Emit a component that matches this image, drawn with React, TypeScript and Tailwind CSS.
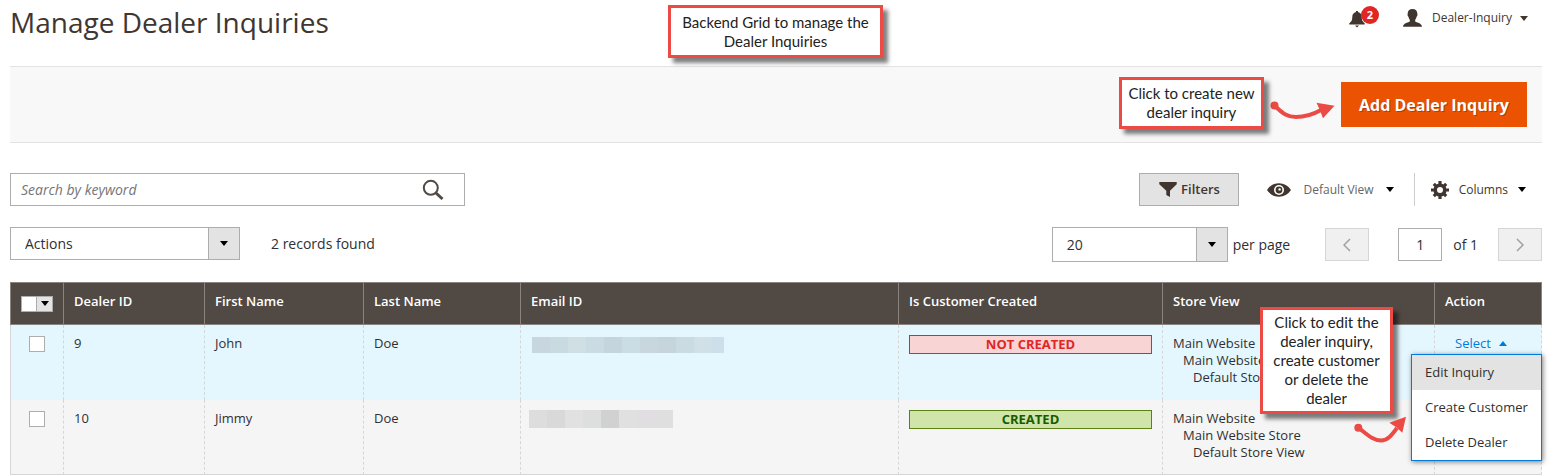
import type { ReactNode } from 'react';

type Tile = { x: number; width: number; color: string };

type Dealer = {
    id: number;
    firstName: string;
    lastName: string;
    mask: { height: number; tiles: Tile[] };
    created: boolean;
};

const buildTiles = (start: number, colors: string[], lastWidth = 18): Tile[] =>
    colors.map((color, i) => ({
        x: start + i * 18,
        width: i === colors.length - 1 ? lastWidth : 18,
        color,
    }));

const dealers: Dealer[] = [
    {
        id: 9,
        firstName: 'John',
        lastName: 'Doe',
        mask: {
            height: 16,
            tiles: buildTiles(
                3,
                ['#c8d7df', '#c9dae1', '#cfdfe4', '#cbdbe3', '#c6d4dd', '#cbdde4', '#c8d6de', '#c6d4dc', '#cbdbe2', '#d1e0e7', '#cddfea'],
                12,
            ),
        },
        created: false,
    },
    {
        id: 10,
        firstName: 'Jimmy',
        lastName: 'Doe',
        mask: {
            height: 18,
            tiles: buildTiles(0, ['#dcdddc', '#d9d9d9', '#e1e1e1', '#dddfde', '#d1d1d1', '#e0e0e0', '#e0dee1', '#dfdfdf']),
        },
        created: true,
    },
];

const columns = ['Dealer ID', 'First Name', 'Last Name', 'Email ID', 'Is Customer Created', 'Store View', 'Action'];

function Caret({ up = false, className = 'text-black' }: { up?: boolean; className?: string }) {
    return (
        <svg className={`w-2 h-[5px] shrink-0 ${className}`} viewBox="0 0 8 5" fill="currentColor">
            <path d={up ? 'M0 5 4 0l4 5z' : 'M0 0h8L4 5z'} />
        </svg>
    );
}

function Callout({ className, children }: { className: string; children: ReactNode }) {
    return (
        <div
            className={`absolute z-20 flex items-center justify-center text-center border-3 border-[#eb4a45] bg-white text-[#222222] text-[15px] leading-[19px] font-['Lato',sans-serif] font-normal shadow-[5px_5px_4px_rgba(0,0,0,0.5)] ${className}`}
        >
            {children}
        </div>
    );
}

function DropSelect({ label, options, className }: { label: string; options: string[]; className: string }) {
    return (
        <div className={`relative ${className}`}>
            <select
                aria-label={label}
                className="w-full h-full appearance-none rounded-none border border-[#adadad] bg-white pl-3.5 pr-9 text-sm text-[#303030]"
            >
                {options.map((option) => (
                    <option key={option}>{option}</option>
                ))}
            </select>
            <span className="pointer-events-none absolute inset-y-0 right-0 w-8 flex items-center justify-center border border-[#adadad] bg-[#e3e3e3]">
                <Caret />
            </span>
        </div>
    );
}

export default function App() {
    return (
        <div className="pl-2.5 pr-2 pb-px bg-white text-[#41362f] text-[13px] font-['Open_Sans',sans-serif]">
            {/* Page header */}
            <header className="relative flex items-start justify-between h-[66px]">
                <h1 className="pt-1 text-[28px] leading-9">Manage Dealer Inquiries</h1>

                <Callout className="left-[658px] top-[5px] w-[215px] h-[53px]">
                    Backend Grid to manage the
                    <br />
                    Dealer Inquiries
                </Callout>

                <div className="flex items-center h-6 mt-1.5 pr-3.5">
                    <button type="button" aria-label="Notifications" className="relative w-[30px] h-6">
                        <svg className="absolute left-0 top-1 w-4 h-[18px]" viewBox="0 0 16 18" fill="currentColor">
                            <path d="M7 1h2v1c2.4.6 3.7 2.400 3.700 4.800 0 3.400.8 4.800 3 6.400v1.300H.3v-1.300c2.200-1.600 3-3 3-6.400C3.300 4.400 4.600 2.600 7 2z" />
                            <path d="M6 15.600h4l-2 2z" />
                        </svg>
                        <span className="absolute right-0 top-0 size-[18px] rounded-full bg-[#e22626] text-white text-[11px] leading-[18px] font-bold text-center">
                            2
                        </span>
                    </button>
                    <button type="button" className="flex items-center ml-6 text-xs">
                        <svg className="w-[19px] h-[18px] mr-2.5" viewBox="0 0 19 18" fill="currentColor">
                            <path d="M9.500 0c3.100 0 4.800 1.700 4.800 4.600 0 .5.3.9.2 1.500-.1.800-.5 1.300-.9 1.700-.3 1.200-.8 2.200-1.400 3v1.800c1.800 1.200 6.300 1.400 6.800 5.100H0c.5-3.700 5-3.900 6.800-5.100v-1.800c-.6-.8-1.100-1.800-1.400-3-.4-.4-.8-.9-.9-1.700-.1-.6.2-1 .2-1.500C4.700 1.700 6.400 0 9.500 0z" />
                        </svg>
                        <span className="mr-2">Dealer-Inquiry</span>
                        <Caret className="text-[#41362f]" />
                    </button>
                </div>
            </header>

            {/* Main actions */}
            <div className="relative flex justify-end py-[15px] pr-[15px] border-y border-[#e3e3e3] bg-[#f8f8f8]">
                <Callout className="right-[278px] top-2.5 w-[145px] h-[52px]">
                    Click to create new
                    <br />
                    dealer inquiry
                </Callout>
                <svg className="absolute right-[206px] top-[33px] w-[66px] h-6" viewBox="0 0 66 24" fill="none">
                    <circle cx="4.5" cy="5.5" r="4" fill="#eb4a45" />
                    <path d="M4.500 5.500C13 14 18 17 26 17s17-2.500 25-7" stroke="#eb4a45" strokeWidth="4" />
                    <path d="M64.500 5.700 46.500 2.700l3 6.500 3.500 9z" fill="#eb4a45" />
                </svg>
                <button
                    type="button"
                    className="w-[186px] h-[45px] bg-[#eb5202] text-white text-base font-bold [text-shadow:1px_1px_0_rgba(0,0,0,0.25)]"
                >
                    Add Dealer Inquiry
                </button>
            </div>

            {/* Search and view controls */}
            <div className="flex items-center justify-between mt-[30px]">
                <div className="relative w-[455px] h-[33px]">
                    <input
                        type="text"
                        aria-label="Search by keyword"
                        placeholder="Search by keyword"
                        className="w-full h-full border border-[#adadad] pl-2.5 pr-14 text-sm placeholder:italic placeholder:text-[#757575]"
                    />
                    <button type="button" aria-label="Search" className="absolute right-[21px] top-1.5">
                        <svg className="size-[22px]" viewBox="0 0 22 22" fill="none" stroke="#514943">
                            <circle cx="8.8" cy="8.8" r="7" strokeWidth="2" />
                            <path d="m14 14 6.500 6" strokeWidth="3" />
                        </svg>
                    </button>
                </div>

                <div className="flex items-center h-[33px]">
                    <button
                        type="button"
                        className="flex items-center justify-center gap-1 w-[100px] h-full border border-[#adadad] bg-[#e3e3e3] font-semibold"
                    >
                        <svg className="w-[18px] h-[15px]" viewBox="0 0 18 15" fill="currentColor">
                            <path d="M.3 0h17.400v2.200L11 8.700V15L7.300 13V8.700L.3 2.200z" />
                        </svg>
                        Filters
                    </button>
                    <button type="button" className="flex items-center ml-7 mr-5 text-xs text-[#666666]">
                        <svg className="w-6 h-3.5 mr-3 text-[#41362f]" viewBox="0 0 24 14">
                            <path d="M0 7C3 2.500 7 .3 12 .3S21 2.500 24 7c-3 4.500-7 6.700-12 6.700S3 11.500 0 7z" fill="currentColor" />
                            <circle cx="12" cy="7" r="5" fill="#fff" />
                            <circle cx="12" cy="7" r="3.4" fill="currentColor" />
                            <circle cx="12.6" cy="6.4" r="1.2" fill="#fff" />
                        </svg>
                        <span className="mr-3">Default View</span>
                        <Caret />
                    </button>
                    <button type="button" className="flex items-center h-full border-l border-[#cccccc] pl-4 pr-4 text-xs">
                        <svg className="size-[18px] mr-2.5" viewBox="-9 -9 18 18" fill="none" stroke="currentColor">
                            <circle r="4.8" strokeWidth="3.6" />
                            <path
                                d="M0-9v3M0 6v3M-9 0h3M6 0h3M-6.200-6.200l2 2M4.200 4.200l2 2M-6.200 6.200l2-2M4.200-4.200l2-2"
                                strokeWidth="3.2"
                            />
                        </svg>
                        <span className="mr-2.5">Columns</span>
                        <Caret />
                    </button>
                </div>
            </div>

            {/* Mass actions and pager */}
            <div className="flex items-start justify-between mt-[21px] text-sm text-[#303030]">
                <div className="flex items-center">
                    <DropSelect label="Actions" options={['Actions']} className="w-[230px] h-[33px]" />
                    <span className="ml-[31px]">2 records found</span>
                </div>
                <div className="flex items-center">
                    <DropSelect label="Records per page" options={['20', '30', '50']} className="w-[176px] h-[35px]" />
                    <span className="ml-[5px]">per page</span>
                    <button
                        type="button"
                        aria-label="Previous page"
                        className="flex items-center justify-center w-11 h-[33px] ml-[35px] border border-[#d6d6d6] bg-[#f0f0f0]"
                    >
                        <svg className="w-2 h-3.5" viewBox="0 0 8 14" fill="none" stroke="#a0a0a0" strokeWidth="1.5">
                            <path d="M7 1 1 7l6 6" />
                        </svg>
                    </button>
                    <input
                        type="text"
                        aria-label="Page"
                        defaultValue="1"
                        className="w-11 h-[33px] ml-[29px] border border-[#adadad] text-center"
                    />
                    <span className="ml-[11px]">of 1</span>
                    <button
                        type="button"
                        aria-label="Next page"
                        className="flex items-center justify-center w-11 h-[33px] ml-5 border border-[#d6d6d6] bg-[#f0f0f0]"
                    >
                        <svg className="w-2 h-3.5" viewBox="0 0 8 14" fill="none" stroke="#a0a0a0" strokeWidth="1.5">
                            <path d="m1 1 6 6-6 6" />
                        </svg>
                    </button>
                </div>
            </div>

            {/* Grid */}
            <table className="w-full mt-5 table-fixed border-separate border-spacing-0 leading-[17px] text-[#303030]">
                <colgroup>
                    <col className="w-[53px]" />
                    <col className="w-[141px]" />
                    <col className="w-[159px]" />
                    <col className="w-[157px]" />
                    <col />
                    <col className="w-[264px]" />
                    <col className="w-[272px]" />
                    <col className="w-[108px]" />
                </colgroup>
                <thead>
                    <tr className="h-[43px] bg-[#514943] text-white text-left align-top">
                        <th className="border-y border-l border-[#8a837f] p-0 align-middle">
                            <div className="flex w-8 h-4 mx-auto">
                                <input
                                    type="checkbox"
                                    aria-label="Select all"
                                    className="size-4 appearance-none border border-[#adadad] bg-white"
                                />
                                <button
                                    type="button"
                                    aria-label="Selection options"
                                    className="flex items-center justify-center size-4 border-y border-r border-[#adadad] bg-[#e3e3e3]"
                                >
                                    <Caret />
                                </button>
                            </div>
                        </th>
                        {columns.map((column) => (
                            <th
                                key={column}
                                className="border-y border-l last:border-r border-[#8a837f] px-2.5 pt-2.5 font-semibold"
                            >
                                {column}
                            </th>
                        ))}
                    </tr>
                </thead>
                <tbody>
                    {dealers.map((dealer, index) => (
                        <tr
                            key={dealer.id}
                            className="group h-[75px] align-top bg-[#e5f7fe] last:bg-[#f5f5f5] *:border-l *:border-dashed *:border-[#d6d6d6] *:first:border-solid *:pt-2.5"
                        >
                            <td className="group-last:border-b text-center">
                                <input
                                    type="checkbox"
                                    aria-label={`Select dealer ${dealer.id}`}
                                    className="block size-4 mx-auto mt-px appearance-none border border-[#adadad] bg-white"
                                />
                            </td>
                            <td className="px-2.5 group-last:[border-bottom:1px_solid_#d6d6d6]">{dealer.id}</td>
                            <td className="px-2.5 group-last:[border-bottom:1px_solid_#d6d6d6]">{dealer.firstName}</td>
                            <td className="px-2.5 group-last:[border-bottom:1px_solid_#d6d6d6]">{dealer.lastName}</td>
                            <td className="px-2 group-last:[border-bottom:1px_solid_#d6d6d6]">
                                <svg width="195" height={dealer.mask.height} className="mt-0.5 group-last:mt-0" shapeRendering="crispEdges">
                                    {dealer.mask.tiles.map((tile) => (
                                        <rect key={tile.x} x={tile.x} width={tile.width} height={dealer.mask.height} fill={tile.color} />
                                    ))}
                                </svg>
                            </td>
                            <td className="px-2.5 group-last:[border-bottom:1px_solid_#d6d6d6]">
                                <div
                                    className={`border text-center font-bold ${dealer.created
                                            ? 'border-[#5b8116] bg-[#d0e5a9] text-[#185b00]'
                                            : 'border-[#e22626] bg-[#f9d4d4] text-[#e22626]'
                                        }`}
                                >
                                    {dealer.created ? 'CREATED' : 'NOT CREATED'}
                                </div>
                            </td>
                            <td className="px-2.5 group-last:[border-bottom:1px_solid_#d6d6d6]">
                                <div>Main Website</div>
                                <div className="pl-2.5">Main Website Store</div>
                                <div className="pl-5">Default Store View</div>
                            </td>
                            <td className="relative px-5 [border-right:1px_solid_#d6d6d6] group-last:[border-bottom:1px_solid_#d6d6d6]">
                                {index === 0 && (
                                    <>
                                        <button type="button" className="flex items-center gap-2 text-[#007bdb]">
                                            Select
                                            <Caret up className="text-[#007bdb]" />
                                        </button>
                                        <ul className="absolute z-10 -right-px top-[29px] w-[131px] border border-[#007bdb] bg-white shadow-[1px_1px_5px_rgba(0,0,0,0.5)]">
                                            {['Edit Inquiry', 'Create Customer', 'Delete Dealer'].map((item) => (
                                                <li key={item} className="first:bg-[#e3e3e3]">
                                                    <a href="#" className="block h-[35px] px-[13px] leading-[35px] whitespace-nowrap">
                                                        {item}
                                                    </a>
                                                </li>
                                            ))}
                                        </ul>
                                        <Callout className="right-[148px] top-[-18px] w-[133px] h-[107px]">
                                            Click to edit the
                                            <br />
                                            dealer inquiry,
                                            <br />
                                            create customer
                                            <br />
                                            or delete the
                                            <br />
                                            dealer
                                        </Callout>
                                        <svg className="absolute z-20 right-[134px] top-[91px] w-[53px] h-7" viewBox="0 0 53 28" fill="none">
                                            <circle cx="4.3" cy="11.7" r="4" fill="#eb4a45" />
                                            <path d="M4.300 11.700C14 19 19 24.500 27 24.500c7 0 11-6 16-12.500" stroke="#eb4a45" strokeWidth="4" />
                                            <path d="M52 .7 35.300 6.700l7 4.500 6 5.500z" fill="#eb4a45" />
                                        </svg>
                                    </>
                                )}
                            </td>
                        </tr>
                    ))}
                </tbody>
            </table>
        </div>
    );
}
